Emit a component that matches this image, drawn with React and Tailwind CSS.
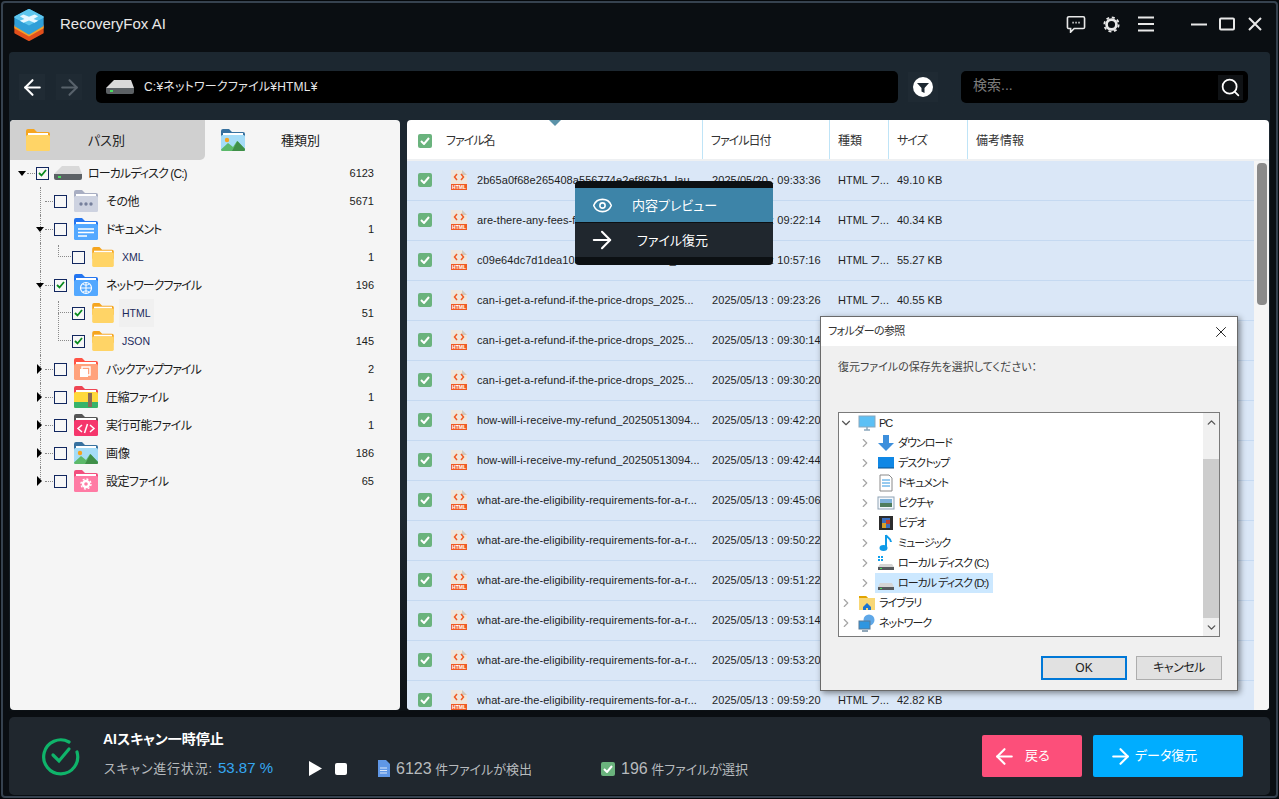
import React from 'react';
import { ArrowLeft, ArrowRight, ChevronDown, ChevronRight, ChevronUp, Eye, Search, X } from 'lucide-react';

const kana = 'tracking-[-1px]';
const mixed = 'tracking-[-0.5px]';

const treeItems = [
  { label: 'ローカルディスク (C:)', count: 6123, level: 0, open: true, checked: true, icon: 'drive', tr: 'tracking-[-0.9px]' },
  { label: 'その他', count: 5671, level: 1, icon: 'other', tr: mixed },
  { label: 'ドキュメント', count: 1, level: 1, open: true, icon: 'doc', tr: kana },
  { label: 'XML', count: 1, level: 2, icon: 'yellow', first: true },
  { label: 'ネットワークファイル', count: 196, level: 1, open: true, checked: true, icon: 'net', tr: kana },
  { label: 'HTML', count: 51, level: 2, checked: true, icon: 'yellow', active: true, first: true },
  { label: 'JSON', count: 145, level: 2, checked: true, icon: 'yellow' },
  { label: 'バックアップファイル', count: 2, level: 1, closed: true, icon: 'backup', tr: kana },
  { label: '圧縮ファイル', count: 1, level: 1, closed: true, icon: 'zip', tr: mixed },
  { label: '実行可能ファイル', count: 1, level: 1, closed: true, icon: 'exe', tr: mixed },
  { label: '画像', count: 186, level: 1, closed: true, icon: 'image' },
  { label: '設定ファイル', count: 65, level: 1, closed: true, icon: 'settings', tr: mixed, last: true },
];

const refund = 'can-i-get-a-refund-if-the-price-drops_2025...';
const receive = 'how-will-i-receive-my-refund_20250513094...';
const elig = 'what-are-the-eligibility-requirements-for-a-r...';

// rows behind the dialog show no type or size
const files = [
  ['2b65a0f68e265408a556774e2ef867b1_lau...', '2025/05/20 : 09:33:36', '49.10 KB'],
  ['are-there-any-fees-for-using-the-service...', '2025/05/13 : 09:22:14', '40.34 KB'],
  ['c09e64dc7d1dea103f2a9c4be71d5a06_hel...', '2025/05/13 : 10:57:16', '55.27 KB'],
  [refund, '2025/05/13 : 09:23:26', '40.55 KB'],
  [refund, '2025/05/13 : 09:30:14'],
  [refund, '2025/05/13 : 09:30:20'],
  [receive, '2025/05/13 : 09:42:20'],
  [receive, '2025/05/13 : 09:42:44'],
  [elig, '2025/05/13 : 09:45:06'],
  [elig, '2025/05/13 : 09:50:22'],
  [elig, '2025/05/13 : 09:51:22'],
  [elig, '2025/05/13 : 09:53:14'],
  [elig, '2025/05/13 : 09:53:20'],
  [elig, '2025/05/13 : 09:59:20', '42.82 KB'],
];

const Logo = () => (
  <svg width="32" height="33" viewBox="0 0 34 36" strokeLinejoin="round">
    <path d="M2 19l15-8 15 8v8l-15 8-15-8z" fill="#e2501c" stroke="#e2501c" strokeWidth="2" />
    <path d="M1 19l16 9 16-9v3l-16 9-16-9z" fill="#f2a02c" />
    <path d="M2 10l15-8 15 8v9l-15 9-15-9z" fill="#2f9fd8" stroke="#2f9fd8" strokeWidth="2" />
    <path d="M2 10l15-8 15 8-15 8z" fill="#5ec6ee" stroke="#5ec6ee" strokeWidth="2" />
    <path d="M7 9l4-2 6 2.500L23 7l4 2-5 3 5 2-4 2-6-2.500L11 16l-4-2 5-2z" fill="#e6f7ff" />
  </svg>
);

const DriveIcon = ({ w = 30, h = 16 }) => (
  <svg width={w} height={h} viewBox="0 0 30 16">
    <path d="M1 9L9 1h17l3 8z" fill="#d9d9d9" />
    <path d="M1 9h28v4a2 2 0 0 1-2 2H3a2 2 0 0 1-2-2z" fill="#5c6165" />
    <rect x="5" y="11" width="3" height="2" fill="#4ade60" />
  </svg>
);

const FolderBase = ({ tab, body, children }) => (
  <svg width="26" height="24" viewBox="0 0 26 24">
    <path d="M1 3a2 2 0 0 1 2-2h6l3 3h11a2 2 0 0 1 2 2v8H1z" fill={tab} />
    <rect x="3" y="5" width="20" height="2" fill="#fff" />
    <rect x="1" y="7" width="24" height="16" rx="1.500" fill={body} />
    {children}
  </svg>
);

const ImageScene = () => (
  <>
    <circle cx="7" cy="12" r="2.200" fill="#f6a21e" />
    <path d="M1 21.500L8 15l5 4 4-6 8 8v.500a1.500 1.500 0 0 1-1.500 1.500h-21A1.500 1.500 0 0 1 1 21.500z" fill="#5cb96a" />
    <path d="M12 23l5.500-10L25 21v.500a1.500 1.500 0 0 1-1.500 1.500z" fill="#3f8f48" />
  </>
);

const FolderIcon = ({ type }) => {
  if (type === 'yellow') return <FolderBase tab="#f5a51f" body="#ffd466" />;
  if (type === 'other')
    return (
      <FolderBase tab="#a8aec2" body="#cdd2e0">
        <circle cx="8" cy="15" r="1.700" fill="#76809c" />
        <circle cx="13" cy="15" r="1.700" fill="#76809c" />
        <circle cx="18" cy="15" r="1.700" fill="#76809c" />
      </FolderBase>
    );
  if (type === 'doc')
    return (
      <FolderBase tab="#2475f0" body="#53a8ff">
        <path d="M5 12h16M5 15.500h16M5 19h9" stroke="#fff" strokeWidth="1.600" />
      </FolderBase>
    );
  if (type === 'net')
    return (
      <FolderBase tab="#2475f0" body="#53a8ff">
        <circle cx="13" cy="15" r="5.500" fill="none" stroke="#fff" strokeWidth="1.200" />
        <path d="M7.500 15h11M13 9.500v11M10 11c2 1.500 4 1.500 6 0M10 19c2-1.500 4-1.500 6 0" fill="none" stroke="#fff" />
      </FolderBase>
    );
  if (type === 'backup')
    return (
      <FolderBase tab="#ff5345" body="#ffa27c">
        <path d="M9 12V10h8v8h-2" fill="none" stroke="#fff" strokeWidth="1.400" />
        <rect x="7" y="12" width="8" height="8" fill="#fff" />
      </FolderBase>
    );
  if (type === 'zip')
    return (
      <FolderBase tab="#ee4452" body="#ffd93b">
        <path d="M1 17h24v4.500a1.500 1.500 0 0 1-1.500 1.500h-21A1.500 1.500 0 0 1 1 21.500z" fill="#37b36a" />
        <rect x="15" y="8" width="4" height="14" fill="#8a6a58" />
      </FolderBase>
    );
  if (type === 'exe')
    return (
      <FolderBase tab="#555" body="#f5366c">
        <path d="M9 12l-4 3.500 4 3.500M17 12l4 3.500-4 3.500M14.500 11l-3 9" fill="none" stroke="#fff" strokeWidth="1.500" />
      </FolderBase>
    );
  if (type === 'image') return <FolderBase tab="#37719f" body="#a5dcf7"><ImageScene /></FolderBase>;
  if (type === 'settings')
    return (
      <FolderBase tab="#f24f7e" body="#ff7ba4">
        <circle cx="13" cy="15" r="3" fill="none" stroke="#fff" strokeWidth="2.400" />
        <circle cx="13" cy="15" r="5" fill="none" stroke="#fff" strokeWidth="1.400" strokeDasharray="2 1.900" />
      </FolderBase>
    );
  return null;
};

const TreeCheck = ({ checked }) => (
  <span className="relative z-10 w-[13px] h-[13px] shrink-0 border border-[#12275f] bg-[#f7f7f7] flex items-center justify-center">
    {checked && (
      <svg width="9" height="8" viewBox="0 0 9 8">
        <path d="M1 4l2.500 2.500L8 1" fill="none" stroke="#0a8a1e" strokeWidth="1.800" />
      </svg>
    )}
  </span>
);

const GreenCheck = () => (
  <span className="w-[14px] h-[14px] shrink-0 rounded-[2px] bg-[#6ab37d] flex items-center justify-center">
    <svg width="10" height="8" viewBox="0 0 10 8">
      <path d="M1 4l3 3 5-6" fill="none" stroke="#fff" strokeWidth="2" />
    </svg>
  </span>
);

const TreeRow = ({ item }) => {
  const indent = { 0: 'pl-[8px]', 1: 'pl-[26px]', 2: 'pl-[62px]' }[item.level];
  const left = { 0: 'w-[18px]', 1: 'w-[18px]', 2: 'w-0' }[item.level];
  return (
    <div className={`relative h-[28px] flex items-center pr-[26px] text-[12px] text-[#1b1b1b] ${indent}`}>
      {item.level > 0 && (
        <span className={`absolute left-[30px] top-0 w-0 border-l border-dotted border-[#8a8a8a] ${item.last ? 'h-[14px]' : 'h-full'}`} />
      )}
      {item.level === 2 && (
        <span className={`absolute left-[48px] w-[13px] border-l border-b border-dotted border-[#8a8a8a] ${item.first ? 'top-[2px] h-[12px]' : 'top-[-14px] h-[28px]'}`} />
      )}
      <span className={`${left} shrink-0 flex items-center relative`}>
        {item.open && <span className="w-0 h-0 border-x-[4.500px] border-x-transparent border-t-[5px] border-t-black z-10" />}
        {item.closed && <span className="ml-[1px] w-0 h-0 border-y-[5px] border-y-transparent border-l-[5px] border-l-black z-10" />}
        {item.level < 2 && <span className="absolute right-[1px] w-[8px] border-t border-dotted border-[#8a8a8a]" />}
      </span>
      <TreeCheck checked={item.checked} />
      {item.icon === 'drive' ? (
        <span className="ml-[4px] w-[31px] flex"><DriveIcon /></span>
      ) : (
        <span className={`flex ${item.level === 1 ? 'ml-[6px]' : 'ml-[5px] scale-90'}`}><FolderIcon type={item.icon} /></span>
      )}
      {item.level === 2 ? (
        <span className={`ml-[3px] h-[28px] pt-px px-[3px] flex items-center text-[10.500px] text-[#1c2a5c] whitespace-nowrap ${item.active ? 'bg-[#f0f0f0]' : ''}`}>
          {item.label}
        </span>
      ) : (
        <span className={`pt-px whitespace-nowrap ${item.tr || ''} ${item.icon === 'drive' ? 'ml-[4px]' : 'ml-[7px]'}`}>{item.label}</span>
      )}
      <span className="ml-auto text-[11px]">{item.count}</span>
    </div>
  );
};

const HtmlIcon = () => (
  <svg width="18" height="22" viewBox="0 0 18 22" className="shrink-0">
    <path d="M1 1h11l5 5v15H1z" fill="#eee6dc" />
    <path d="M12 1l5 5h-5z" fill="#cfc8be" />
    <path d="M7 5L4.500 8 7 11M11 5l2.500 3L11 11" fill="none" stroke="#ef5a24" strokeWidth="1.500" />
    <rect x="1" y="15" width="16" height="6" fill="#ef5a24" />
    <text x="9" y="20.200" textAnchor="middle" fontSize="5" fontWeight="700" fill="#fff" fontFamily="Liberation Sans">HTML</text>
  </svg>
);

const FileRow = ({ file }) => (
  <div className="h-[40px] shrink-0 flex items-center border-b border-[#c5d9f1] bg-[#dae7f7] text-[11px] text-[#1e1e1e]">
    <div className="w-[295px] shrink-0 flex items-center pl-[11px] pb-px">
      <GreenCheck />
      <span className="ml-[18px] flex"><HtmlIcon /></span>
      <span className="ml-[9px] w-[222px] whitespace-nowrap overflow-hidden tracking-[0.06px]">{file[0]}</span>
    </div>
    <div className="w-[126px] shrink-0 pl-[10px] whitespace-nowrap tracking-[0.08px]">{file[1]}</div>
    {file[2] && (
      <>
        <div className="w-[59px] shrink-0 pl-[10px] whitespace-nowrap">HTML フ...</div>
        <div className="pl-[10px] whitespace-nowrap">{file[2]}</div>
      </>
    )}
  </div>
);

const HeaderCell = ({ className, children }) => (
  <div className={`h-full shrink-0 flex items-center pl-[8px] pt-[2px] border-r border-[#bfe4f7] ${className}`}>{children}</div>
);

const dlgItems = [
  { label: 'ダウンロード', icon: 'download' },
  { label: 'デスクトップ', icon: 'desktop' },
  { label: 'ドキュメント', icon: 'document' },
  { label: 'ピクチャ', icon: 'picture' },
  { label: 'ビデオ', icon: 'video' },
  { label: 'ミュージック', icon: 'music' },
  { label: 'ローカル ディスク (C:)', icon: 'diskc' },
  { label: 'ローカル ディスク (D:)', icon: 'diskd', selected: true },
];

const DlgIcon = ({ type }) => {
  const icons = {
    pc: (
      <>
        <rect x="1" y="2" width="16" height="11" fill="#5cc0f5" stroke="#8aa8bd" />
        <path d="M6 16h6M9 13v3" stroke="#8aa8bd" strokeWidth="1.500" />
      </>
    ),
    download: <path d="M6 1h6v8h5l-8 8-8-8h5z" fill="#3d8fdc" />,
    desktop: (
      <>
        <rect x="1" y="3" width="16" height="11" fill="#0f87e5" />
        <path d="M1 14h16" stroke="#0a4f8a" />
      </>
    ),
    document: (
      <>
        <path d="M3 1h9l3 3v13H3z" fill="#fff" stroke="#8a8a8a" />
        <path d="M5 6h8M5 9h8M5 12h8" stroke="#2f96e0" />
      </>
    ),
    picture: (
      <>
        <rect x="1" y="3" width="16" height="12" fill="#f4f8fc" stroke="#8fa3b5" />
        <path d="M3 5h12v4H3z" fill="#7fb2d9" />
        <path d="M3 9h12v4H3z" fill="#4f7d5c" />
      </>
    ),
    video: (
      <>
        <rect x="2" y="2" width="14" height="14" fill="#2c2c2c" />
        <rect x="5" y="4" width="8" height="10" fill="#3a6fc0" />
        <path d="M5 9h4v5H5z" fill="#d8a02a" />
        <path d="M9 6h4v4H9z" fill="#c0402a" />
      </>
    ),
    music: (
      <>
        <path d="M9 1v12" stroke="#0f9be8" strokeWidth="2" />
        <ellipse cx="6.500" cy="14" rx="4" ry="3" fill="#0f9be8" />
        <path d="M9 1c1 3 5 3 5 7" fill="none" stroke="#0f9be8" strokeWidth="2" />
      </>
    ),
    diskc: (
      <>
        <path d="M1 2h2v2H1zM4 2h2v2H4zM1 5h2v2H1zM4 5h2v2H4z" fill="#0fa0ee" />
        <path d="M3 10h12l2 3v3H1v-3z" fill="#d5d5d5" />
        <rect x="1" y="13" width="16" height="3" fill="#565a5e" />
        <rect x="3" y="14" width="2" height="1" fill="#4ade60" />
      </>
    ),
    diskd: (
      <>
        <path d="M3 9h12l2 4v3H1v-3z" fill="#d5d5d5" />
        <rect x="1" y="13" width="16" height="3" fill="#565a5e" />
        <rect x="3" y="14" width="2" height="1" fill="#4ade60" />
      </>
    ),
    library: (
      <>
        <path d="M1 2h7l2 2h7v12H1z" fill="#f8d775" />
        <path d="M1 2h7l2 2H1z" fill="#e2a400" />
        <path d="M5 13l4-4 4 4v3h-3v-2H8v2H5z" fill="#1c74d0" />
      </>
    ),
    network: (
      <>
        <circle cx="11" cy="6" r="5.500" fill="#5fa8e8" />
        <rect x="1" y="7" width="11" height="8" fill="#2f96e0" stroke="#5a7a96" />
        <path d="M4 17h6" stroke="#6c8aa2" strokeWidth="1.500" />
      </>
    ),
  };
  return (
    <svg width="18" height="18" viewBox="0 0 18 18" className="shrink-0">
      {icons[type]}
    </svg>
  );
};

const DlgRow = ({ label, icon, indent, open, selected }) => (
  <div className={`h-[20px] flex items-center ${indent ? 'pl-[19px]' : 'pl-0'}`}>
    {open ? (
      <ChevronDown size={14} strokeWidth={2} className="text-[#555] shrink-0" />
    ) : (
      <ChevronRight size={14} strokeWidth={2} className="text-[#a6a6a6] shrink-0" />
    )}
    <span className={`ml-[3px] pl-[2px] h-[20px] flex items-center ${selected ? 'bg-[#cce8ff]' : ''}`}>
      <DlgIcon type={icon} />
      <span className="ml-[3px] pr-[5px] text-[11px] tracking-[-1px] whitespace-nowrap">{label}</span>
    </span>
  </div>
);

const FolderDialog = () => (
  <div className="absolute left-[820px] top-[316px] w-[418px] h-[375px] flex flex-col bg-[#f0f0f0] border border-[#6a6a6a] shadow-[2px_2px_6px_rgba(0,0,0,0.45)] text-[11px] text-[#222]">
    <div className="h-[29px] shrink-0 bg-white flex items-center justify-between pl-[7px] pr-[7px]">
      <span className="text-[#333] tracking-[-0.6px]">フォルダーの参照</span>
      <X size={18} strokeWidth={1.300} className="text-[#222]" />
    </div>
    <div className="pl-[17px] pt-[13px] h-[66px] shrink-0 text-[#444]">復元ファイルの保存先を選択してください：</div>
    <div className="mx-[17px] h-[225px] shrink-0 border border-[#7a7a7a] bg-white flex">
      <div className="flex-1 min-w-0">
        <DlgRow label="PC" icon="pc" open />
        {dlgItems.map((d) => (
          <DlgRow key={d.label} label={d.label} icon={d.icon} selected={d.selected} indent />
        ))}
        <DlgRow label="ライブラリ" icon="library" />
        <DlgRow label="ネットワーク" icon="network" />
      </div>
      <div className="w-[16px] shrink-0 bg-[#f0f0f0] flex flex-col items-center">
        <ChevronUp size={13} strokeWidth={2.500} className="text-[#555] mt-[3px]" />
        <div className="w-full h-[159px] bg-[#cdcdcd] mt-[30px]" />
        <ChevronDown size={13} strokeWidth={2.500} className="text-[#555] mt-[3px]" />
      </div>
    </div>
    <div className="flex justify-end gap-[9px] pr-[15px] pt-[19px] text-[12px]">
      <button className="w-[86px] h-[24px] bg-[#e1e1e1] border-2 border-[#0078d7]">OK</button>
      <button className="w-[86px] h-[24px] bg-[#e1e1e1] border border-[#adadad] tracking-[-0.5px]">キャンセル</button>
    </div>
  </div>
);

const ContextMenu = () => (
  <div className="absolute left-[575px] top-[181px] w-[198px] h-[84px] flex flex-col rounded-[4px] bg-[#0c1013] pt-[7px] pb-[8px] text-[13px] text-white">
    <div className="h-[34px] shrink-0 bg-[#3d84a8] flex items-center pl-[17px]">
      <Eye size={21} strokeWidth={1.800} />
      <span className="ml-[19px] pt-px">内容プレビュー</span>
    </div>
    <div className="h-px shrink-0 bg-[#0c1013]" />
    <div className="h-[34px] shrink-0 bg-[#20272e] flex items-center pl-[13px]">
      <ArrowRight size={28} strokeWidth={1.800} />
      <span className="ml-[21px] pt-px">ファイル復元</span>
    </div>
  </div>
);

export default function App() {
  return (
    <div className="relative w-[1279px] h-[799px] overflow-hidden bg-[#05080b] p-px font-['Liberation_Sans','Noto_Sans_CJK_JP',sans-serif] [font-feature-settings:'palt']">
      <div className="h-full flex flex-col rounded-[4px] border-2 border-[#36424f] bg-[#0a0e12]">
        {/* title bar */}
        <div className="h-[49px] shrink-0 flex items-center pb-[7px] text-[#e8e8e8]">
          <span className="ml-[10px] flex"><Logo /></span>
          <span className="ml-[15px] text-[15px]">RecoveryFox AI</span>
          <div className="ml-auto flex items-center">
            <svg width="20" height="18" viewBox="0 0 22 20" className="mr-[17px]">
              <path d="M3 2h16a1.500 1.500 0 0 1 1.500 1.500v10A1.500 1.500 0 0 1 19 15H9l-4 4v-4H3a1.500 1.500 0 0 1-1.500-1.500v-10A1.500 1.500 0 0 1 3 2z" fill="none" stroke="#e8e8e8" strokeWidth="1.800" />
              <path d="M7 8.500h1.500M10.300 8.500h1.500M13.600 8.500h1.500" stroke="#e8e8e8" strokeWidth="2" />
            </svg>
            <svg width="17" height="17" viewBox="0 0 19 19" className="mr-[18px]">
              <circle cx="9.500" cy="9.500" r="5.500" fill="none" stroke="#e8e8e8" strokeWidth="3" />
              <circle cx="9.500" cy="9.500" r="8" fill="none" stroke="#e8e8e8" strokeWidth="2" strokeDasharray="3.300 3" />
            </svg>
            <svg width="16" height="16" viewBox="0 0 16 16" className="mr-[37px]">
              <path d="M0 1.500h16M0 8h16M0 14.500h16" stroke="#e8e8e8" strokeWidth="2" />
            </svg>
            <svg width="16" height="16" viewBox="0 0 16 16" className="mr-[12px]">
              <path d="M0 8.500h16" stroke="#e8e8e8" strokeWidth="2" />
            </svg>
            <svg width="16" height="14" viewBox="0 0 16 14" className="mr-[13px]">
              <rect x="1" y="1.500" width="14" height="11" rx="1" fill="none" stroke="#e8e8e8" strokeWidth="2" />
            </svg>
            <svg width="14" height="14" viewBox="0 0 14 14" className="mr-[14px]">
              <path d="M1 1l12 12M13 1L1 13" stroke="#e8e8e8" strokeWidth="2" />
            </svg>
          </div>
        </div>

        {/* content */}
        <div className="h-[659px] shrink-0 mx-[6px] rounded-t-[4px] bg-gradient-to-b from-[#1c2730] from-[70%] to-[#0c1115] flex flex-col">
          <div className="h-[68px] shrink-0 flex items-center pt-[2px]">
            <button className="ml-[10px] w-[26px] h-[26px] bg-[#202b34] flex items-center justify-center text-white">
              <ArrowLeft size={25} strokeWidth={2} />
            </button>
            <button className="ml-[11px] w-[26px] h-[26px] bg-[#1f2a33] flex items-center justify-center text-[#58626b]">
              <ArrowRight size={25} strokeWidth={2} />
            </button>
            <div className="ml-[14px] w-[802px] h-[32px] rounded-[5px] bg-black flex items-center pl-[9px] text-[12px] text-[#e8e8e8]">
              <DriveIcon />
              <span className="ml-[9px] pb-px tracking-[0.2px]">C:¥ネットワークファイル¥HTML¥</span>
            </div>
            <button className="ml-[10px] w-[30px] h-[30px] bg-[#1f2a33] flex items-center justify-center">
              <svg width="20" height="20" viewBox="0 0 20 20">
                <circle cx="10" cy="10" r="10" fill="#fff" />
                <path d="M4 6h12l-4.500 5v5l-3-1.500V11z" fill="#1c2730" />
              </svg>
            </button>
            <div className="ml-[23px] w-[287px] h-[32px] rounded-[5px] bg-black flex items-center justify-between pl-[12px] pr-[5px] text-[14px] text-[#7d7d7d]">
              <span className="pb-[3px]">検索...</span>
              <span className="w-[25px] h-[25px] bg-[#0f1215] flex items-center justify-center text-white">
                <Search size={21} strokeWidth={2} />
              </span>
            </div>
          </div>

          <div className="h-[590px] shrink-0 flex px-px gap-[7px]">
            {/* left tree */}
            <div className="w-[390px] shrink-0 rounded-[4px] bg-[#f5f5f5] overflow-hidden">
              <div className="h-[40px] flex text-[13px] text-[#222]">
                <div className="w-[195px] rounded-br-[5px] bg-[#d0d0d0] flex items-center pl-[15px]">
                  <FolderIcon type="yellow" />
                  <span className="ml-[37px] pt-px">パス別</span>
                </div>
                <div className="w-[195px] flex items-center pl-[15px]">
                  <FolderIcon type="image" />
                  <span className="ml-[35px] pt-px">種類別</span>
                </div>
              </div>
              <div className="-mt-px">
                {treeItems.map((item) => (
                  <TreeRow key={item.label} item={item} />
                ))}
              </div>
            </div>

            {/* file table */}
            <div className="flex-1 min-w-0 rounded-[4px] bg-white overflow-hidden flex flex-col">
              <div className="relative h-[41px] shrink-0 flex items-center text-[12px] text-[#333] border-b-2 border-[#eef0f2]">
                <span className="absolute left-[142px] top-0 w-0 h-0 border-x-[6px] border-x-transparent border-t-[6px] border-t-[#5b92a8]" />
                <HeaderCell className="w-[296px] pl-[11px]">
                  <GreenCheck />
                  <span className="ml-[14px] tracking-[-1px]">ファイル名</span>
                </HeaderCell>
                <HeaderCell className="w-[127px]"><span className="tracking-[-1px]">ファイル日付</span></HeaderCell>
                <HeaderCell className="w-[59px]">種類</HeaderCell>
                <HeaderCell className="w-[79px]"><span className="tracking-[-1px]">サイズ</span></HeaderCell>
                <div className="pl-[8px] pt-[2px]">備考情報</div>
              </div>
              <div className="flex-1 min-h-0 flex">
                <div className="w-[847px] shrink-0 flex flex-col overflow-hidden">
                  {files.map((f, i) => (
                    <FileRow key={i} file={f} />
                  ))}
                </div>
                <div className="flex-1 pt-[2px] bg-[#f5f5f5] flex justify-center">
                  <div className="w-[10px] h-[142px] rounded-[4px] bg-[#8a8a8a]" />
                </div>
              </div>
            </div>
          </div>
        </div>

        {/* bottom status bar */}
        <div className="mt-[6px] mx-[6px] h-[78px] shrink-0 rounded-[5px] bg-[#20272e] flex items-center">
          <svg width="40" height="40" viewBox="0 0 40 40" className="ml-[31px] shrink-0">
            <path d="M29 6a17 17 0 1 0 8 10" fill="none" stroke="#0fb46a" strokeWidth="3.200" strokeLinecap="round" />
            <path d="M13 19l6 6 10-12" fill="none" stroke="#0fb46a" strokeWidth="3.200" strokeLinecap="round" />
          </svg>
          <div className="ml-[23px] pb-[5px] flex-1 min-w-0">
            <div className="text-[14px] font-bold text-white leading-[20px]">AIスキャン一時停止</div>
            <div className="mt-[10px] flex items-center h-[20px] text-[13px] text-[#b6babd]">
              <span className="ml-px w-[114px] shrink-0 whitespace-nowrap tracking-[0.8px]">スキャン進行状況:</span>
              <span className="w-[91px] shrink-0 text-[15px] text-[#35a7f2] whitespace-nowrap">53.87 %</span>
              <svg width="13" height="15" viewBox="0 0 13 15" className="shrink-0">
                <path d="M0 0l13 7.500L0 15z" fill="#fff" />
              </svg>
              <span className="ml-[13px] w-[12px] h-[12px] shrink-0 rounded-[2px] bg-white" />
              <svg width="13" height="17" viewBox="0 0 13 17" className="ml-[30px] shrink-0">
                <path d="M1 0h8l4 4v13H1z" fill="#5f97e6" />
                <path d="M3 8h7M3 10.500h7M3 13h7" stroke="#dbe8fa" />
              </svg>
              <span className="ml-[6px] w-[205px] shrink-0 whitespace-nowrap"><span className="text-[16px]">6123</span> 件ファイルが検出</span>
              <GreenCheck />
              <span className="ml-[6px] whitespace-nowrap"><span className="text-[16px]">196</span> 件ファイルが選択</span>
            </div>
          </div>
          <div className="ml-auto mr-[27px] flex gap-[11px] text-[13px] text-white">
            <button className="w-[100px] h-[42px] rounded-[2px] bg-[#fc4f7a] flex items-center pl-[10px]">
              <ArrowLeft size={25} strokeWidth={2} />
              <span className="ml-[8px]">戻る</span>
            </button>
            <button className="w-[150px] h-[42px] rounded-[2px] bg-[#00adff] flex items-center pl-[15px]">
              <ArrowRight size={25} strokeWidth={2} />
              <span className="ml-[2px]">データ復元</span>
            </button>
          </div>
        </div>
      </div>

      <ContextMenu />
      <FolderDialog />
    </div>
  );
}
